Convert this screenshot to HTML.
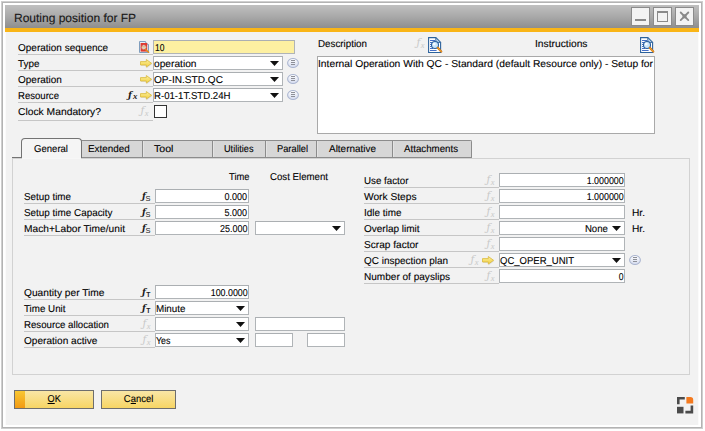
<!DOCTYPE html>
<html lang="en"><head><meta charset="utf-8"><title>Routing position for FP</title>
<style>
html,body{margin:0;padding:0}
body{width:705px;height:431px;background:#fff;position:relative;overflow:hidden;font-family:"Liberation Sans",sans-serif;font-size:10px;color:#151515}
div,span.t,svg.a,span.fx,span.ff{position:absolute}
div{box-sizing:content-box}
.t{white-space:nowrap;display:block;text-rendering:geometricPrecision;-webkit-text-stroke:.1px #000}
.hl{height:1px}
.f{border:1px solid #b0b4b7;border-top-color:#abafb2}
.fx{font-family:"Liberation Serif",serif;font-style:italic;font-size:9.5px;line-height:13px;white-space:nowrap;display:block}
.ff{font-family:"DejaVu Serif","Liberation Serif",serif;font-style:italic;line-height:13px;white-space:nowrap;display:block;transform-origin:0 0}
.fs{font-family:"Liberation Sans",sans-serif;font-style:normal}
.tab{background:#d7d7d7;border:1px solid #8c8c8c;border-bottom:none;border-radius:0 2px 0 0}
.btn{border:1px solid #6e6e6e;background:linear-gradient(#f9e6a6,#f7d564)}
.wb{border:1px solid #8b8b8b;background:#f3f3f3}
u{text-decoration:underline;text-underline-offset:1px}
</style></head><body>
<div style="left:1px;top:1px;width:700px;height:426px;border:1px solid #cfcfcf;"></div><div style="left:2px;top:2px;width:698px;height:424px;border:1px solid #b3b3b3;"></div><div style="left:5px;top:5px;width:694px;height:420px;background:#f2f2f2;"></div><div style="left:5px;top:32px;width:1px;height:393px;background:#fbfbfb;"></div><div style="left:698px;top:32px;width:1px;height:393px;background:#fbfbfb;"></div><div style="left:5px;top:5px;width:694px;height:23px;background:linear-gradient(#c0c0c0,#a9a9a9 50%,#8e8e8e);"></div><div style="left:5px;top:28px;width:694px;height:4px;background:#f9b517;"></div><span class="t" style="top:10.94px;font-size:12px;line-height:15px;color:#1a1a1a;left:14px;transform-origin:0 0;">Routing position for FP</span><div class="wb" style="left:631px;top:7px;width:17px;height:17px;"></div><div class="wb" style="left:653px;top:7px;width:17px;height:17px;"></div><div class="wb" style="left:675px;top:7px;width:17px;height:17px;"></div><div style="left:635px;top:19px;width:11px;height:2px;background:#8a8a8a;"></div><div style="left:657px;top:11px;width:9px;height:8px;border:1px solid #8a8a8a;border-top-width:2px;"></div><svg class="a" style="left:679px;top:11px" width="11" height="11" viewBox="0 0 11 11"><path d="M1.7 1.5L9.3 9.1M9.3 1.5L1.7 9.1" stroke="#8a8a8a" stroke-width="1.8" stroke-linecap="round"/><rect x="3.5" y="3.3" width="4" height="4" fill="#898989"/></svg><span class="t" style="top:42.03px;font-size:10px;line-height:13px;color:#000;left:18px;transform-origin:0 0;">Operation sequence</span><div class="hl" style="left:18px;top:54px;width:135px;background:#c6c6c6"></div><span class="t" style="top:58.03px;font-size:10px;line-height:13px;color:#000;left:18px;transform-origin:0 0;transform:scaleX(0.9914);">Type</span><div class="hl" style="left:18px;top:70px;width:135px;background:#c6c6c6"></div><span class="t" style="top:74.03px;font-size:10px;line-height:13px;color:#000;left:18px;transform-origin:0 0;">Operation</span><div class="hl" style="left:18px;top:86px;width:135px;background:#c6c6c6"></div><span class="t" style="top:90.03px;font-size:10px;line-height:13px;color:#000;left:18px;transform-origin:0 0;transform:scaleX(0.9577);">Resource</span><div class="hl" style="left:18px;top:102px;width:135px;background:#c6c6c6"></div><span class="t" style="top:105.53px;font-size:10px;line-height:13px;color:#000;left:18px;transform-origin:0 0;transform:scaleX(1.0299);">Clock Mandatory?</span><div class="hl" style="left:18px;top:120px;width:135px;background:#c6c6c6"></div><div class="f" style="left:153px;top:40px;width:140px;height:12px;background:#fdf0a1"></div><span class="t" style="top:42.03px;font-size:10px;line-height:13px;color:#000;left:155px;transform-origin:0 0;transform:scaleX(0.8539);">10</span><svg class="a" style="left:139px;top:41px" width="11" height="12" viewBox="0 0 11 12"><path d="M.5 .5H6.5L9.5 3.5V11.5H.5Z" fill="#e6eef6" stroke="#7f9dbd"/><path d="M6.5 .5V3.5H9.5" fill="#fff" stroke="#7f9dbd" stroke-width=".8"/><rect x="1.6" y="2" width="6.6" height="8.6" fill="#e0392f"/><circle cx="4.8" cy="6.3" r="2.5" fill="#d9ecf7" stroke="#d04a3a" stroke-width=".8"/><path d="M3 5.6H6.6M3 7H6.6" stroke="#e9a24a" stroke-width=".7"/><path d="M6.8 8.6L9.6 11.2" stroke="#e28a1c" stroke-width="1.5" stroke-linecap="round"/></svg><div class="f" style="left:153px;top:56px;width:128px;height:12px;background:#fff"></div><span class="t" style="top:57.53px;font-size:10px;line-height:13px;color:#000;left:154px;transform-origin:0 0;transform:scaleX(1.0191);">operation</span><svg class="a" style="left:270px;top:61px" width="9" height="5" viewBox="0 0 9 5"><path d="M0 0H9L4.5 5Z" fill="#111"/></svg><svg class="a" style="left:287px;top:58px" width="12" height="10" viewBox="0 0 12 10"><defs><linearGradient id="gc" x1="0" y1="0" x2="0" y2="1"><stop offset="0" stop-color="#ffffff"/><stop offset="1" stop-color="#d3daee"/></linearGradient></defs><ellipse cx="6" cy="5" rx="5.4" ry="4.5" fill="url(#gc)" stroke="#adb7d1" stroke-width="1.1"/><path d="M4 2.5H8M4 4.5H8M4 6.5H8" stroke="#8e9098" stroke-width="1"/></svg><svg class="a" style="left:139.5px;top:59.4px" width="13" height="10" viewBox="0 0 13 10"><defs><linearGradient id="ga" x1="0" y1="0" x2="0" y2="1"><stop offset="0" stop-color="#fbf0a0"/><stop offset="1" stop-color="#f3cf3c"/></linearGradient></defs><path d="M1 3.6H6.8V1.2L12 5.2L6.8 9.2V6.8H1Z" fill="#c9c9c9" opacity=".55"/><path d="M.5 2.6H6.3V.5L11.6 4.3L6.3 8.1V6H.5Z" fill="url(#ga)" stroke="#d9b93c" stroke-width=".8" stroke-linejoin="round"/></svg><div class="f" style="left:153px;top:72px;width:128px;height:12px;background:#fff"></div><span class="t" style="top:73.53px;font-size:10px;line-height:13px;color:#000;left:154px;transform-origin:0 0;transform:scaleX(1.0096);">OP-IN.STD.QC</span><svg class="a" style="left:270px;top:77px" width="9" height="5" viewBox="0 0 9 5"><path d="M0 0H9L4.5 5Z" fill="#111"/></svg><svg class="a" style="left:287px;top:74px" width="12" height="10" viewBox="0 0 12 10"><defs><linearGradient id="gc" x1="0" y1="0" x2="0" y2="1"><stop offset="0" stop-color="#ffffff"/><stop offset="1" stop-color="#d3daee"/></linearGradient></defs><ellipse cx="6" cy="5" rx="5.4" ry="4.5" fill="url(#gc)" stroke="#adb7d1" stroke-width="1.1"/><path d="M4 2.5H8M4 4.5H8M4 6.5H8" stroke="#8e9098" stroke-width="1"/></svg><svg class="a" style="left:139.5px;top:75.4px" width="13" height="10" viewBox="0 0 13 10"><defs><linearGradient id="ga" x1="0" y1="0" x2="0" y2="1"><stop offset="0" stop-color="#fbf0a0"/><stop offset="1" stop-color="#f3cf3c"/></linearGradient></defs><path d="M1 3.6H6.8V1.2L12 5.2L6.8 9.2V6.8H1Z" fill="#c9c9c9" opacity=".55"/><path d="M.5 2.6H6.3V.5L11.6 4.3L6.3 8.1V6H.5Z" fill="url(#ga)" stroke="#d9b93c" stroke-width=".8" stroke-linejoin="round"/></svg><div class="f" style="left:153px;top:88px;width:128px;height:12px;background:#fff"></div><span class="t" style="top:89.53px;font-size:10px;line-height:13px;color:#000;left:154px;transform-origin:0 0;transform:scaleX(0.9626);">R-01-1T.STD.24H</span><svg class="a" style="left:270px;top:93px" width="9" height="5" viewBox="0 0 9 5"><path d="M0 0H9L4.5 5Z" fill="#111"/></svg><svg class="a" style="left:287px;top:90px" width="12" height="10" viewBox="0 0 12 10"><defs><linearGradient id="gc" x1="0" y1="0" x2="0" y2="1"><stop offset="0" stop-color="#ffffff"/><stop offset="1" stop-color="#d3daee"/></linearGradient></defs><ellipse cx="6" cy="5" rx="5.4" ry="4.5" fill="url(#gc)" stroke="#adb7d1" stroke-width="1.1"/><path d="M4 2.5H8M4 4.5H8M4 6.5H8" stroke="#8e9098" stroke-width="1"/></svg><svg class="a" style="left:139.5px;top:91.4px" width="13" height="10" viewBox="0 0 13 10"><defs><linearGradient id="ga" x1="0" y1="0" x2="0" y2="1"><stop offset="0" stop-color="#fbf0a0"/><stop offset="1" stop-color="#f3cf3c"/></linearGradient></defs><path d="M1 3.6H6.8V1.2L12 5.2L6.8 9.2V6.8H1Z" fill="#c9c9c9" opacity=".55"/><path d="M.5 2.6H6.3V.5L11.6 4.3L6.3 8.1V6H.5Z" fill="url(#ga)" stroke="#d9b93c" stroke-width=".8" stroke-linejoin="round"/></svg><span class="ff" style="left:128.2px;top:87.6px;color:#1a1a1a;font-weight:bold;font-size:10px;transform:scaleX(.9)">ƒ</span><span class="fx" style="left:132.9px;top:90px;color:#1a1a1a;font-weight:bold;font-size:8.8px;transform:translateY(.4px)">x</span><span class="ff" style="left:140.5px;top:104px;color:#c9c9c9;font-size:10.5px">ƒ</span><span class="fx" style="left:144.8px;top:107.4px;color:#c9c9c9;font-size:8.5px">x</span><div style="left:154px;top:105px;width:11px;height:11px;border:1px solid #333;background:#fff;"></div><span class="t" style="top:37.53px;font-size:10px;line-height:13px;color:#000;left:318px;transform-origin:0 0;transform:scaleX(0.9794);">Description</span><span class="t" style="top:37.53px;font-size:10px;line-height:13px;color:#000;left:534.5px;transform-origin:0 0;transform:scaleX(1.0266);">Instructions</span><span class="ff" style="left:416.5px;top:36px;color:#c9c9c9;font-size:10.5px">ƒ</span><span class="fx" style="left:420.8px;top:39.4px;color:#c9c9c9;font-size:8.5px">x</span><svg class="a" style="left:428px;top:37px" width="15" height="17" viewBox="0 0 15 17"><path d="M.6 .6H7.8L12.6 5.4V15.5H.6Z" fill="#fff" stroke="#2c629c" stroke-width="1.1"/><path d="M7.8 .6V5.4H12.6Z" fill="#bcd3ea" stroke="#2c629c" stroke-width=".9" stroke-linejoin="round"/><path d="M2 3.5H7M2 5.5H4.5M2 7.5H3.6M2 9.5H3.6M2 11.5H5M2 13.5H8.6" stroke="#456fc6" stroke-width="1"/><circle cx="7" cy="8" r="3.5" fill="#cbe5fa" stroke="#2b5f9e" stroke-width="1.1"/><circle cx="6.2" cy="7.1" r="1.4" fill="#fff" opacity=".85"/><path d="M9.8 10.8L13.3 14.6" stroke="#b9650d" stroke-width="2.1" stroke-linecap="round"/><path d="M9.8 10.8L13.3 14.6" stroke="#f3a02a" stroke-width="1.2" stroke-linecap="round"/></svg><svg class="a" style="left:640px;top:37px" width="15" height="17" viewBox="0 0 15 17"><path d="M.6 .6H7.8L12.6 5.4V15.5H.6Z" fill="#fff" stroke="#2c629c" stroke-width="1.1"/><path d="M7.8 .6V5.4H12.6Z" fill="#bcd3ea" stroke="#2c629c" stroke-width=".9" stroke-linejoin="round"/><path d="M2 3.5H7M2 5.5H4.5M2 7.5H3.6M2 9.5H3.6M2 11.5H5M2 13.5H8.6" stroke="#456fc6" stroke-width="1"/><circle cx="7" cy="8" r="3.5" fill="#cbe5fa" stroke="#2b5f9e" stroke-width="1.1"/><circle cx="6.2" cy="7.1" r="1.4" fill="#fff" opacity=".85"/><path d="M9.8 10.8L13.3 14.6" stroke="#b9650d" stroke-width="2.1" stroke-linecap="round"/><path d="M9.8 10.8L13.3 14.6" stroke="#f3a02a" stroke-width="1.2" stroke-linecap="round"/></svg><div style="left:317px;top:56px;width:336px;height:76px;border:1px solid #a9a9a9;background:#fff;"></div><span class="t" style="top:57.53px;font-size:10px;line-height:13px;color:#000;left:318px;transform-origin:0 0;transform:scaleX(1.0285);">Internal Operation With QC - Standard (default Resource only) - Setup for</span><div style="left:12px;top:158px;width:676px;height:215px;border:1px solid #d2d2d2;"></div><div class="hl" style="left:12px;top:157px;width:9px;background:#737373"></div><div class="tab" style="left:81px;top:140px;width:61px;height:17px;"></div><span class="t" style="top:142.53px;font-size:10px;line-height:13px;color:#000;left:88.25px;transform-origin:0 0;transform:scaleX(0.9890);">Extended</span><div class="tab" style="left:142px;top:140px;width:70px;height:17px;"></div><div style="left:143px;top:141px;width:1px;height:16px;background:#e3e3e3;"></div><span class="t" style="top:142.53px;font-size:10px;line-height:13px;color:#000;left:154px;transform-origin:0 0;transform:scaleX(1.0621);">Tool</span><div class="tab" style="left:212px;top:140px;width:53px;height:17px;"></div><div style="left:213px;top:141px;width:1px;height:16px;background:#e3e3e3;"></div><span class="t" style="top:142.53px;font-size:10px;line-height:13px;color:#000;left:224px;transform-origin:0 0;transform:scaleX(0.9152);">Utilities</span><div class="tab" style="left:265px;top:140px;width:51px;height:17px;"></div><div style="left:266px;top:141px;width:1px;height:16px;background:#e3e3e3;"></div><span class="t" style="top:142.53px;font-size:10px;line-height:13px;color:#000;left:277px;transform-origin:0 0;transform:scaleX(0.9293);">Parallel</span><div class="tab" style="left:316px;top:140px;width:76px;height:17px;"></div><div style="left:317px;top:141px;width:1px;height:16px;background:#e3e3e3;"></div><span class="t" style="top:142.53px;font-size:10px;line-height:13px;color:#000;left:328.5px;transform-origin:0 0;transform:scaleX(0.9947);">Alternative</span><div class="tab" style="left:392px;top:140px;width:78px;height:17px;"></div><div style="left:393px;top:141px;width:1px;height:16px;background:#e3e3e3;"></div><span class="t" style="top:142.53px;font-size:10px;line-height:13px;color:#000;left:403.5px;transform-origin:0 0;transform:scaleX(0.9713);">Attachments</span><div class="hl" style="left:81px;top:157px;width:390px;background:#8c8c8c"></div><div style="left:21px;top:138px;width:59px;height:19px;background:#f5f5f5;border:1px solid #737373;border-bottom:none;border-radius:4px 4px 0 0;"></div><div style="left:22px;top:158px;width:59px;height:1px;background:#f7f7f7;"></div><span class="t" style="top:142.53px;font-size:10px;line-height:13px;color:#000;left:34px;transform-origin:0 0;transform:scaleX(0.9556);">General</span><span class="t" style="top:171.03px;font-size:10px;line-height:13px;color:#000;left:229px;transform-origin:0 0;transform:scaleX(0.9378);">Time</span><span class="t" style="top:171.03px;font-size:10px;line-height:13px;color:#000;left:270px;transform-origin:0 0;transform:scaleX(0.9662);">Cost Element</span><span class="t" style="top:190.53px;font-size:10px;line-height:13px;color:#000;left:24px;transform-origin:0 0;transform:scaleX(0.9830);">Setup time</span><div class="hl" style="left:24px;top:203px;width:131px;background:#c6c6c6"></div><div class="f" style="left:155px;top:189px;width:92px;height:12px;background:#fff"></div><span class="ff" style="left:142.2px;top:188.6px;color:#1a1a1a;font-weight:bold;font-size:10px;transform:scaleX(.9)">ƒ</span><span class="fx fs" style="left:145.6px;top:191.65px;color:#1a1a1a;font-size:7.5px">S</span><span class="t" style="top:190.53px;font-size:10px;line-height:13px;color:#000;left:222.47px;transform-origin:100% 0;transform:scaleX(0.8989);">0.000</span><span class="t" style="top:206.53px;font-size:10px;line-height:13px;color:#000;left:24px;transform-origin:0 0;transform:scaleX(0.9888);">Setup time Capacity</span><div class="hl" style="left:24px;top:219px;width:131px;background:#c6c6c6"></div><div class="f" style="left:155px;top:205px;width:92px;height:12px;background:#fff"></div><span class="ff" style="left:142.2px;top:204.6px;color:#1a1a1a;font-weight:bold;font-size:10px;transform:scaleX(.9)">ƒ</span><span class="fx fs" style="left:145.6px;top:207.65px;color:#1a1a1a;font-size:7.5px">S</span><span class="t" style="top:206.53px;font-size:10px;line-height:13px;color:#000;left:222.47px;transform-origin:100% 0;transform:scaleX(0.8989);">5.000</span><span class="t" style="top:222.53px;font-size:10px;line-height:13px;color:#000;left:24px;transform-origin:0 0;transform:scaleX(1.0180);">Mach+Labor Time/unit</span><div class="hl" style="left:24px;top:235px;width:131px;background:#c6c6c6"></div><div class="f" style="left:155px;top:221px;width:92px;height:12px;background:#fff"></div><span class="ff" style="left:142.2px;top:220.6px;color:#1a1a1a;font-weight:bold;font-size:10px;transform:scaleX(.9)">ƒ</span><span class="fx fs" style="left:145.6px;top:223.65px;color:#1a1a1a;font-size:7.5px">S</span><span class="t" style="top:222.53px;font-size:10px;line-height:13px;color:#000;left:216.91px;transform-origin:100% 0;transform:scaleX(0.8989);">25.000</span><span class="t" style="top:286.54px;font-size:10px;line-height:13px;color:#000;left:24px;transform-origin:0 0;transform:scaleX(1.0200);">Quantity per Time</span><div class="hl" style="left:24px;top:299px;width:131px;background:#c6c6c6"></div><div class="f" style="left:155px;top:285px;width:92px;height:12px;background:#fff"></div><span class="ff" style="left:142.2px;top:284.6px;color:#1a1a1a;font-weight:bold;font-size:10px;transform:scaleX(.9)">ƒ</span><span class="fx fs" style="left:146.25px;top:287.90px;color:#1a1a1a;font-size:6.8px;font-weight:bold">T</span><span class="t" style="top:286.54px;font-size:10px;line-height:13px;color:#000;left:205.78px;transform-origin:100% 0;transform:scaleX(0.8869);">100.0000</span><span class="t" style="top:302.54px;font-size:10px;line-height:13px;color:#000;left:24px;transform-origin:0 0;transform:scaleX(0.9783);">Time Unit</span><div class="hl" style="left:24px;top:315px;width:131px;background:#c6c6c6"></div><div class="f" style="left:155px;top:301px;width:92px;height:12px;background:#fff"></div><span class="ff" style="left:142.2px;top:300.6px;color:#1a1a1a;font-weight:bold;font-size:10px;transform:scaleX(.9)">ƒ</span><span class="fx fs" style="left:146.25px;top:303.90px;color:#1a1a1a;font-size:6.8px;font-weight:bold">T</span><span class="t" style="top:318.54px;font-size:10px;line-height:13px;color:#000;left:24px;transform-origin:0 0;transform:scaleX(0.9678);">Resource allocation</span><div class="hl" style="left:24px;top:331px;width:131px;background:#c6c6c6"></div><div class="f" style="left:155px;top:317px;width:92px;height:12px;background:#fff"></div><span class="ff" style="left:142.5px;top:317px;color:#c9c9c9;font-size:10.5px">ƒ</span><span class="fx" style="left:146.8px;top:320.4px;color:#c9c9c9;font-size:8.5px">x</span><span class="t" style="top:334.54px;font-size:10px;line-height:13px;color:#000;left:24px;transform-origin:0 0;transform:scaleX(1.0092);">Operation active</span><div class="hl" style="left:24px;top:347px;width:131px;background:#c6c6c6"></div><div class="f" style="left:155px;top:333px;width:92px;height:12px;background:#fff"></div><span class="ff" style="left:142.5px;top:333px;color:#c9c9c9;font-size:10.5px">ƒ</span><span class="fx" style="left:146.8px;top:336.4px;color:#c9c9c9;font-size:8.5px">x</span><div class="f" style="left:255px;top:221px;width:88px;height:12px;background:#fff"></div><svg class="a" style="left:332px;top:226px" width="9" height="5" viewBox="0 0 9 5"><path d="M0 0H9L4.5 5Z" fill="#111"/></svg><span class="t" style="top:302.54px;font-size:10px;line-height:13px;color:#000;left:155.7px;transform-origin:0 0;transform:scaleX(0.9828);">Minute</span><svg class="a" style="left:236px;top:306px" width="9" height="5" viewBox="0 0 9 5"><path d="M0 0H9L4.5 5Z" fill="#111"/></svg><svg class="a" style="left:236px;top:322px" width="9" height="5" viewBox="0 0 9 5"><path d="M0 0H9L4.5 5Z" fill="#111"/></svg><span class="t" style="top:334.54px;font-size:10px;line-height:13px;color:#000;left:155.7px;transform-origin:0 0;transform:scaleX(0.8880);">Yes</span><svg class="a" style="left:236px;top:338px" width="9" height="5" viewBox="0 0 9 5"><path d="M0 0H9L4.5 5Z" fill="#111"/></svg><div class="f" style="left:255px;top:317px;width:88px;height:12px;background:#fff"></div><div class="f" style="left:255px;top:333px;width:36px;height:12px;background:#fff"></div><div class="f" style="left:307px;top:333px;width:36px;height:12px;background:#fff"></div><span class="t" style="top:174.53px;font-size:10px;line-height:13px;color:#000;left:364px;transform-origin:0 0;transform:scaleX(0.9763);">Use factor</span><div class="hl" style="left:364px;top:187px;width:135px;background:#c6c6c6"></div><div class="f" style="left:499px;top:173px;width:124px;height:12px;background:#fff"></div><span class="ff" style="left:486.5px;top:173px;color:#c9c9c9;font-size:10.5px">ƒ</span><span class="fx" style="left:490.8px;top:176.4px;color:#c9c9c9;font-size:8.5px">x</span><span class="t" style="top:190.53px;font-size:10px;line-height:13px;color:#000;left:364px;transform-origin:0 0;transform:scaleX(1.0194);">Work Steps</span><div class="hl" style="left:364px;top:203px;width:135px;background:#c6c6c6"></div><div class="f" style="left:499px;top:189px;width:124px;height:12px;background:#fff"></div><span class="ff" style="left:486.5px;top:189px;color:#c9c9c9;font-size:10.5px">ƒ</span><span class="fx" style="left:490.8px;top:192.4px;color:#c9c9c9;font-size:8.5px">x</span><span class="t" style="top:206.53px;font-size:10px;line-height:13px;color:#000;left:364px;transform-origin:0 0;transform:scaleX(0.9921);">Idle time</span><div class="hl" style="left:364px;top:219px;width:135px;background:#c6c6c6"></div><div class="f" style="left:499px;top:205px;width:124px;height:12px;background:#fff"></div><span class="ff" style="left:486.5px;top:205px;color:#c9c9c9;font-size:10.5px">ƒ</span><span class="fx" style="left:490.8px;top:208.4px;color:#c9c9c9;font-size:8.5px">x</span><span class="t" style="top:222.53px;font-size:10px;line-height:13px;color:#000;left:364px;transform-origin:0 0;">Overlap limit</span><div class="hl" style="left:364px;top:235px;width:135px;background:#c6c6c6"></div><div class="f" style="left:499px;top:221px;width:124px;height:12px;background:#fff"></div><span class="ff" style="left:486.5px;top:221px;color:#c9c9c9;font-size:10.5px">ƒ</span><span class="fx" style="left:490.8px;top:224.4px;color:#c9c9c9;font-size:8.5px">x</span><span class="t" style="top:238.53px;font-size:10px;line-height:13px;color:#000;left:364px;transform-origin:0 0;transform:scaleX(1.0107);">Scrap factor</span><div class="hl" style="left:364px;top:251px;width:135px;background:#c6c6c6"></div><div class="f" style="left:499px;top:237px;width:124px;height:12px;background:#fff"></div><span class="ff" style="left:486.5px;top:237px;color:#c9c9c9;font-size:10.5px">ƒ</span><span class="fx" style="left:490.8px;top:240.4px;color:#c9c9c9;font-size:8.5px">x</span><span class="t" style="top:254.53px;font-size:10px;line-height:13px;color:#000;left:364px;transform-origin:0 0;transform:scaleX(0.9941);">QC inspection plan</span><div class="hl" style="left:364px;top:267px;width:135px;background:#c6c6c6"></div><div class="f" style="left:499px;top:253px;width:124px;height:12px;background:#fff"></div><span class="ff" style="left:470.5px;top:253px;color:#c9c9c9;font-size:10.5px">ƒ</span><span class="fx" style="left:474.8px;top:256.4px;color:#c9c9c9;font-size:8.5px">x</span><svg class="a" style="left:481.5px;top:256.4px" width="13" height="10" viewBox="0 0 13 10"><defs><linearGradient id="ga" x1="0" y1="0" x2="0" y2="1"><stop offset="0" stop-color="#fbf0a0"/><stop offset="1" stop-color="#f3cf3c"/></linearGradient></defs><path d="M1 3.6H6.8V1.2L12 5.2L6.8 9.2V6.8H1Z" fill="#c9c9c9" opacity=".55"/><path d="M.5 2.6H6.3V.5L11.6 4.3L6.3 8.1V6H.5Z" fill="url(#ga)" stroke="#d9b93c" stroke-width=".8" stroke-linejoin="round"/></svg><span class="t" style="top:270.54px;font-size:10px;line-height:13px;color:#000;left:364px;transform-origin:0 0;transform:scaleX(1.0047);">Number of payslips</span><div class="hl" style="left:364px;top:283px;width:135px;background:#c6c6c6"></div><div class="f" style="left:499px;top:269px;width:124px;height:12px;background:#fff"></div><span class="ff" style="left:486.5px;top:269px;color:#c9c9c9;font-size:10.5px">ƒ</span><span class="fx" style="left:490.8px;top:272.4px;color:#c9c9c9;font-size:8.5px">x</span><span class="t" style="top:174.53px;font-size:10px;line-height:13px;color:#000;left:581.78px;transform-origin:100% 0;transform:scaleX(0.8869);">1.000000</span><span class="t" style="top:190.53px;font-size:10px;line-height:13px;color:#000;left:581.78px;transform-origin:100% 0;transform:scaleX(0.8869);">1.000000</span><span class="t" style="top:206.53px;font-size:10px;line-height:13px;color:#000;left:632px;transform-origin:0 0;transform:scaleX(1.0171);">Hr.</span><span class="t" style="top:222.53px;font-size:10px;line-height:13px;color:#000;left:632px;transform-origin:0 0;transform:scaleX(1.0171);">Hr.</span><span class="t" style="top:222.53px;font-size:10px;line-height:13px;color:#000;left:583.59px;transform-origin:100% 0;transform:scaleX(0.9621);">None</span><svg class="a" style="left:612px;top:226px" width="9" height="5" viewBox="0 0 9 5"><path d="M0 0H9L4.5 5Z" fill="#111"/></svg><span class="t" style="top:254.53px;font-size:10px;line-height:13px;color:#000;left:500px;transform-origin:0 0;transform:scaleX(0.9512);">QC_OPER_UNIT</span><svg class="a" style="left:612px;top:258px" width="9" height="5" viewBox="0 0 9 5"><path d="M0 0H9L4.5 5Z" fill="#111"/></svg><svg class="a" style="left:628.5px;top:255px" width="12" height="10" viewBox="0 0 12 10"><defs><linearGradient id="gc" x1="0" y1="0" x2="0" y2="1"><stop offset="0" stop-color="#ffffff"/><stop offset="1" stop-color="#d3daee"/></linearGradient></defs><ellipse cx="6" cy="5" rx="5.4" ry="4.5" fill="url(#gc)" stroke="#adb7d1" stroke-width="1.1"/><path d="M4 2.5H8M4 4.5H8M4 6.5H8" stroke="#8e9098" stroke-width="1"/></svg><span class="t" style="top:270.54px;font-size:10px;line-height:13px;color:#000;left:617.94px;transform-origin:100% 0;transform:scaleX(0.8629);">0</span><div class="btn" style="left:14px;top:390px;width:78px;height:17px;"></div><div style="left:15px;top:391px;width:10px;height:17px;background:linear-gradient(#f8c733,#f29a13);"></div><div class="btn" style="left:101px;top:390px;width:73px;height:17px;"></div><span class="t" style="top:393.04px;font-size:10px;line-height:13px;color:#000;left:46.87px;transform-origin:50% 0;transform:scaleX(0.9168);"><u>O</u>K</span><span class="t" style="top:393.04px;font-size:10px;line-height:13px;color:#000;left:122.68px;transform-origin:50% 0;transform:scaleX(0.9473);">C<u>a</u>ncel</span><svg class="a" style="left:676.8px;top:396.6px" width="17" height="17" viewBox="0 0 17 17"><path d="M0 7.3V0H7.8V2.6H2.6V7.3Z" fill="#4b4b4b"/><path d="M9.4 0H13.4Q16.2 0 16.2 2.8V6.6H9.4Z" fill="#f47a1f"/><rect x="0" y="9.8" width="6.5" height="6.6" fill="#4b4b4b"/><path d="M16.2 8.5V16.4H8.4V13.8H13.6V8.5Z" fill="#4b4b4b"/></svg></body></html>
